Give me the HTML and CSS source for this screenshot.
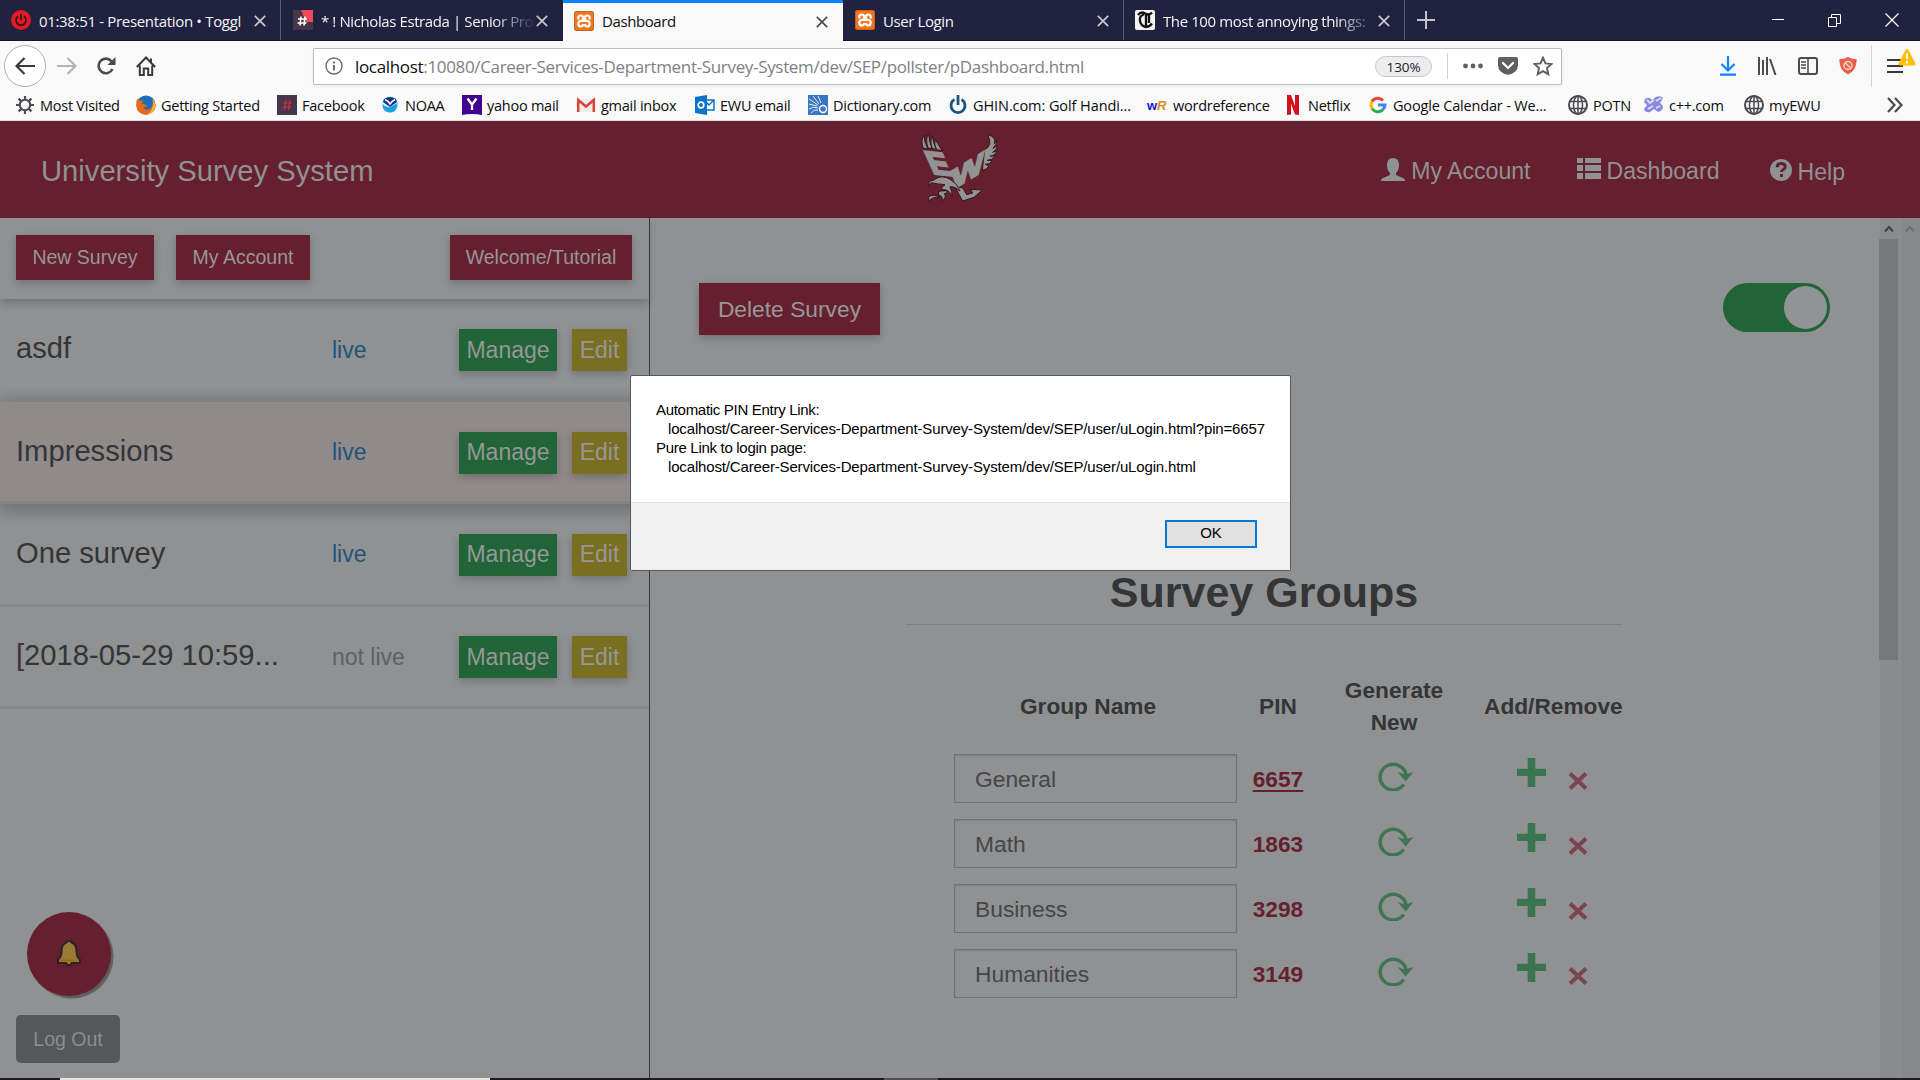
FILE: index.html
```html
<!DOCTYPE html>
<html lang="en">
<head>
<meta charset="utf-8">
<title>Dashboard</title>
<link rel="stylesheet" href="styles.css">
</head>
<body>
<svg class="defs" width="0" height="0">
  <symbol id="i-close" viewBox="0 0 12 12"><path d="M.8.8l10.400 10.400M11.200.8L.8 11.200" fill="none" stroke="currentColor" stroke-width="1.700"/></symbol>
  <symbol id="i-xampp" viewBox="0 0 20 20"><rect width="20" height="20" rx="3" fill="#f07722"/><rect x=".5" y=".5" width="19" height="19" rx="2.500" fill="none" stroke="#c9601a"/><g fill="none" stroke="#fff" stroke-width="2.200"><path d="M4.500 8.500Q3.500 4.500 6.500 4.500T9 7.500Q9 10 6.500 10Q4 10.500 4.300 13T7 15.500Q9 15.500 9 13M15.500 8.500Q16.500 4.500 13.500 4.500T11 7.500Q11 10 13.500 10Q16 10.500 15.700 13T13 15.500Q11 15.500 11 13M7 10h6"/></g></symbol>
  <symbol id="i-globe" viewBox="0 0 20 20"><g fill="none" stroke="#4a4a4f" stroke-width="1.500"><circle cx="10" cy="10" r="9" stroke-width="2"/><ellipse cx="10" cy="10" rx="4.500" ry="9"/><path d="M10 1v18M2 6.500h16M2 13.500h16"/></g></symbol>
  <symbol id="i-refresh" viewBox="0 0 36 30"><path d="M25.800 23.500A13 12.800 0 1 1 28 14v3" fill="none" stroke="currentColor" stroke-width="3.400"/><path d="M19.500 11l7.500 2.500 8.500-2.500-7.800 9.500z" fill="currentColor"/></symbol>
  <symbol id="i-plus" viewBox="0 0 29 29"><path d="M10.700 0h7.600v10.700H29v7.200H18.300V29h-7.600V17.900H0v-7.200h10.700z" fill="currentColor"/></symbol>
  <symbol id="i-cross" viewBox="0 0 20 18"><path d="M2 1.500l16 15M18 1.500l-16 15" fill="none" stroke="currentColor" stroke-width="4"/></symbol>
</svg>

<div class="window">
  <div class="tabs">
    <div class="tab">
      <svg class="fav" viewBox="0 0 20 20"><circle cx="10" cy="10" r="10" fill="#e01b22"/><path d="M7 6.200a5 5 0 1 0 6 0M10 4v6" fill="none" stroke="#3a1018" stroke-width="1.700"/></svg>
      <span class="tab-title">01:38:51 - Presentation • Toggl</span>
      <svg class="x"><use href="#i-close"/></svg>
    </div>
    <div class="tab">
      <svg class="fav" viewBox="0 0 20 20"><path d="M0 0h20v20H0z" fill="#47364a"/><path d="M8 0h12v12h-7z" fill="#ee4a5d"/><path d="M8 6.500l-1 9M12 6.500l-1 9M5 9h9M4.500 13h9" stroke="#fff" stroke-width="1.600"/></svg>
      <span class="tab-title fade">* ! Nicholas Estrada | Senior Pro</span>
      <svg class="x"><use href="#i-close"/></svg>
    </div>
    <div class="tab active">
      <svg class="fav"><use href="#i-xampp"/></svg>
      <span class="tab-title">Dashboard</span>
      <svg class="x"><use href="#i-close"/></svg>
    </div>
    <div class="tab">
      <svg class="fav"><use href="#i-xampp"/></svg>
      <span class="tab-title">User Login</span>
      <svg class="x"><use href="#i-close"/></svg>
    </div>
    <div class="tab">
      <svg class="fav" viewBox="0 0 20 20"><rect width="20" height="20" rx="2" fill="#f4f4f4"/><path d="M3 5q3-4 7-1.500T17 2.500M9 4.500Q4 6 5 11t6 6q4-.5 6-3.500M11 5v11M14 4v9" fill="none" stroke="#111" stroke-width="2.300"/></svg>
      <span class="tab-title fade">The 100 most annoying things:</span>
      <svg class="x"><use href="#i-close"/></svg>
    </div>
    <svg class="newtab" viewBox="0 0 18 18"><path d="M9 0v18M0 9h18" stroke="#c3c3cb" stroke-width="2"/></svg>
    <div class="winctl">
      <svg width="12" height="12"><path d="M0 5.500h12" stroke="#fff"/></svg>
      <svg width="13" height="13" fill="none" stroke="#fff"><path d="M.5 3.500h8v9h-8zM3.500 3.500v-3h9v9h-4"/></svg>
      <svg width="14" height="14" stroke="#fff" stroke-width="1.200"><path d="M.5.500l13 13M13.500.500l-13 13"/></svg>
    </div>
  </div>

  <div class="nav">
    <div class="nav-left">
      <span class="back"><svg width="20" height="18" fill="none" stroke="#38383d" stroke-width="2.200"><path d="M1 9h19M9.500 1L1.500 9l8 8"/></svg></span>
      <svg width="20" height="18" fill="none" stroke="#b4b4b6" stroke-width="2.200"><path d="M0 9h19M10.500 1l8 8-8 8"/></svg>
      <svg width="20" height="20" fill="none" stroke="#4a4a4f" stroke-width="2.600"><path d="M15.700 5.500A7.300 7.300 0 1 0 16.500 13"/><path d="M19.500 1v8h-8z" fill="#4a4a4f" stroke="none"/></svg>
      <svg width="20" height="20" fill="none" stroke="#38383d" stroke-width="2"><path d="M.8 11L10 1.500 19.200 11M3.800 9.500V19h4v-6.500h4.400V19h4V9.500M15 6V2.500"/></svg>
    </div>
    <div class="urlbar">
      <svg class="info" width="18" height="18" fill="none" stroke="#6d6d71" stroke-width="1.400"><circle cx="9" cy="9" r="8"/><path d="M9 8v5.500M9 4.500v2" stroke-width="2"/></svg>
      <span class="url"><b>localhost</b>:10080/Career-Services-Department-Survey-System/dev/SEP/pollster/pDashboard.html</span>
      <span class="zoom">130%</span>
      <i class="vsep"></i>
      <svg width="20" height="6" fill="#606064"><circle cx="2.500" cy="3" r="2.400"/><circle cx="10" cy="3" r="2.400"/><circle cx="17.500" cy="3" r="2.400"/></svg>
      <svg width="20" height="18"><path d="M2 0h16q2 0 2 2v6a10 9.700 0 0 1-20 0V2q0-2 2-2z" fill="#606064"/><path d="M5 6l5 5 5-5" fill="none" stroke="#fff" stroke-width="2.200" stroke-linecap="round"/></svg>
      <svg width="20" height="20"><path d="M10 1.800l2.500 5.600 6 .6-4.500 4.100 1.300 6.100L10 15.100l-5.300 3.100L6 12.100 1.500 8l6-.6z" fill="none" stroke="#606064" stroke-width="2"/></svg>
    </div>
    <div class="nav-right">
      <svg width="16" height="20" fill="none" stroke="#0a84ff" stroke-width="2.200"><path d="M8 0v14M1.500 8L8 14.500 14.500 8M0 18.700h16"/></svg>
      <svg width="20" height="18" stroke="#4a4a4f" stroke-width="2"><path d="M2 0v18M6 3v15M10 0v18M13 2l5.500 16"/></svg>
      <svg width="20" height="18" fill="none" stroke="#4a4a4f" stroke-width="2"><rect x="1" y="1" width="18" height="16" rx="2"/><path d="M10 1v16M3 5h5M3 8h5M3 11h5" stroke-width="1.500"/></svg>
      <svg width="18" height="18"><path d="M9 0q4 2.500 8.500 2Q18.500 13 9 17.500-.5 13 .5 2 5 2.500 9 0z" fill="#e8604a"/><g fill="none" stroke="#fbd5c8" stroke-width="1.400"><circle cx="9" cy="8.500" r="4"/><path d="M6.200 5.700l5.600 5.600"/></g></svg>
      <i class="vsep tall"></i>
      <span class="menu"><svg width="16" height="16" stroke="#38383d" stroke-width="2"><path d="M0 2h16M0 8h16M0 14h16"/></svg><svg class="warn" width="18" height="17"><path d="M9 0q1 0 1.600 1.200L17.300 14q.7 2.500-1.500 2.500H2.200Q0 16.500.7 14L7.400 1.200Q8 0 9 0z" fill="#ffbf00"/><path d="M9 4.500v5.500M9 12v2.500" stroke="#fff" stroke-width="2.200"/></svg></span>
    </div>
  </div>

  <div class="bookmarks">
    <span><svg viewBox="0 0 20 20" fill="none" stroke="#4a4a4f"><circle cx="10" cy="10" r="5.200" stroke-width="2"/><path d="M10 1v4M10 15v4M1 10h4M15 10h4M3.600 3.600l2.800 2.800M13.600 13.600l2.800 2.800M16.400 3.600l-2.800 2.800M6.400 13.600l-2.800 2.800" stroke-width="2.200"/></svg>Most Visited</span>
    <span><svg viewBox="0 0 20 20"><circle cx="10" cy="10" r="9.500" fill="#1b6fb8"/><path d="M1 4q3 2 6 1.500L6 9q5 0 5 2-2 2-4 1 3 5 8 1 3-4 1-9 4 3 3.500 8Q18 19 10 19.800 1 19 .3 11 0 7 1 4z" fill="#ea6a1c"/><path d="M17 5q3 4 2 8-3 6-8 6.500 7-4 6-14.500z" fill="#f6b32b"/></svg>Getting Started</span>
    <span><svg viewBox="0 0 20 20"><path d="M0 0h20v20H0z" fill="#47364a"/><path d="M9 4.500L7.500 15M13 4.500L11.500 15M6 8h9M5.500 12h9" stroke="#ca3345" stroke-width="1.200"/></svg>Facebook</span>
    <span><svg viewBox="0 0 20 20"><circle cx="9" cy="9.500" r="8.500" fill="#d7effb"/><path d="M3 4q6-4 12 0l1 3-7 5-7-5z" fill="#12358a"/><path d="M1.500 9q3.500 4 7.500 3l7.500-4q0 9.500-7.500 9.500T1.500 9z" fill="#1ba0e0"/><path d="M4 4.500Q7.500 6 9 9q2-3 5-4.500" fill="none" stroke="#fff" stroke-width="1.500"/></svg>NOAA</span>
    <span><svg viewBox="0 0 20 20"><path d="M0 0h20v20q-10-2-20 0z" fill="#400090"/><path d="M5.500 3.500L10 9.500V15M14.500 3.500L10 9.500" fill="none" stroke="#fff" stroke-width="2.300"/></svg>yahoo mail</span>
    <span><svg viewBox="0 0 20 20"><path d="M1 4h18v13H1z" fill="#ececec"/><path d="M2.200 17V5l7.800 6.500L17.800 5v12" fill="none" stroke="#d8453a" stroke-width="2.500"/></svg>gmail inbox</span>
    <span><svg viewBox="0 0 20 20"><path d="M10 5h9v10h-9z" fill="#fff" stroke="#0a72c8" stroke-width="1.500"/><path d="M11 7l3 3 5-5" fill="none" stroke="#0a72c8" stroke-width="1.500"/><path d="M0 2l12-2v20L0 18z" fill="#0a72c8"/><circle cx="6" cy="10" r="2.800" fill="none" stroke="#fff" stroke-width="1.700"/></svg>EWU email</span>
    <span><svg viewBox="0 0 20 20"><path d="M0 0h20v20H0z" fill="#3a76c4"/><path d="M1 4l9 6M5 1l6 8M10 1l3 7M1 9l8 2M1 14q5-3 9-1M3 18q3-4 7-3" stroke="#e3edf8" fill="none"/><circle cx="15" cy="14" r="3.500" fill="none" stroke="#fff" stroke-width="1.500"/></svg>Dictionary.com</span>
    <span><svg viewBox="0 0 20 20" fill="none" stroke="#1d5480" stroke-width="2.800"><path d="M6.500 4.500a7 7 0 1 0 7 0M10 0v10"/></svg>GHIN.com: Golf Handi...</span>
    <span><svg viewBox="0 0 20 20"><text x="-1" y="15" class="wr" fill="#1414d0">w</text><text x="9" y="15" class="wr it" fill="#d98b1c">R</text></svg>wordreference</span>
    <span><svg viewBox="0 0 20 20"><path d="M4 0h4l4 11V0h4v20q-2-.5-4-.5L8 9v10.500q-2 0-4 .5z" fill="#d3101c"/></svg>Netflix</span>
    <span><svg viewBox="0 0 20 20" fill="none" stroke-width="3"><path d="M15 5.500A7 7 0 0 0 4 6.500" stroke="#ea4335"/><path d="M4 6.500a7 7 0 0 0 0 7" stroke="#fbbc05"/><path d="M4 13.500a7 7 0 0 0 10.500 1.500" stroke="#34a853"/><path d="M14.500 15A7 7 0 0 0 17 10h-7" stroke="#4285f4"/></svg>Google Calendar - We...</span>
    <span><svg><use href="#i-globe"/></svg>POTN</span>
    <span><svg viewBox="0 0 20 20"><path d="M1 4q4-3 7 1l4-3q5-2 7 1l-3 5 3 3q0 5-5 6l-4-3-4 3q-5 1-6-3l3-4-3-3z" fill="#8c88dd"/><path d="M3 5l3 3 4-3M12 6l5-3M4 14l5-3M12 13l4-2" stroke="#e0deff" stroke-width="1.800" fill="none"/></svg>c++.com</span>
    <span><svg><use href="#i-globe"/></svg>myEWU</span>
    <span><svg class="more" viewBox="0 0 16 16" fill="none" stroke="#4a4a4f" stroke-width="2.200"><path d="M1 1l6.500 7L1 15M8 1l6.500 7L8 15"/></svg></span>
  </div>

  <header class="app-header">
    <h1>University Survey System</h1>
    <svg class="logo" viewBox="0 0 360 300">
      <g stroke="#35161d" stroke-width="3" fill="#929394" stroke-linejoin="round">
        <path d="M70 94Q60 68 74 53Q70 70 84 95zM84 93Q75 65 86 50Q86 72 97 95zM97 95Q88 72 97 57Q99 77 109 97zM109 98Q101 80 106 67Q113 82 127 101z"/>
        <path d="M254 98Q280 85 263 53Q290 60 283 80L291 68Q290 84 279 94L292 86Q290 100 278 106L291 101Q284 117 270 118L286 116Q276 130 262 130L278 131Q268 143 256 142L267 147Q260 158 247 160z"/>
        <path d="M163 206L188 252L222 241L247 219L212 217L218 228L200 233L189 214z"/>
      </g>
      <g class="mark" fill="#929394" stroke="#929394" stroke-width="7">
        <text transform="matrix(.96 .1 .45 .98 98 170)">E</text>
        <text transform="matrix(1.020 -.62 0 .84 155 220)">W</text>
      </g>
      <g stroke="#35161d" stroke-width="3" fill="#929394" stroke-linejoin="round">
        <path d="M86 206Q85 190 100 190Q125 170 152 188Q172 200 180 222Q163 207 150 209Q156 224 157 238Q145 215 128 218Q120 214 135 203Q110 201 94 197z"/>
        <path d="M128 222Q112 220 116 234Q129 236 127 252Q141 240 133 230Q146 229 140 221zM86 239Q103 229 119 241Q107 239 99 243Q89 247 90 252Q84 247 86 239z"/>
      </g>
    </svg>
    <nav>
      <a><svg width="24" height="23"><path d="M12 0q6 0 6 7 0 5-3 8v2l8 3.500q1 .5 1 2.500H0q0-2 1-2.500L9 17v-2q-3-3-3-8 0-7 6-7z" fill="currentColor"/></svg>My Account</a>
      <a><svg width="24" height="21" fill="currentColor"><path d="M0 0h6v5H0zM8 0h16v5H8zM0 7h6v6H0zM8 7h16v6H8zM0 15h6v6H0zM8 15h16v6H8z"/></svg>Dashboard</a>
      <a class="help"><svg width="22" height="22"><circle cx="11" cy="11" r="11" fill="currentColor"/><path d="M7.200 8.300q0-3.800 4-3.800t4 3.300q0 1.700-1.800 2.700-1.900 1-1.900 2.500M11.500 15v3" fill="none" stroke="#661f2f" stroke-width="3"/></svg>Help</a>
    </nav>
  </header>

  <div class="app">
    <aside>
      <div class="actions"><button>New Survey</button><button class="account">My Account</button><button class="tutorial">Welcome/Tutorial</button></div>
      <div class="survey"><span class="name">asdf</span><span class="live">live</span><button class="manage">Manage</button><button class="edit">Edit</button></div>
      <div class="survey selected"><span class="name">Impressions</span><span class="live">live</span><button class="manage">Manage</button><button class="edit">Edit</button></div>
      <div class="survey"><span class="name">One survey</span><span class="live">live</span><button class="manage">Manage</button><button class="edit">Edit</button></div>
      <div class="survey"><span class="name">[2018-05-29 10:59...</span><span class="live off">not live</span><button class="manage">Manage</button><button class="edit">Edit</button></div>
      <div class="side-foot">
        <div class="bell"><svg width="24" height="27" viewBox="0 0 24 27"><path d="M9.500 2.500Q12-1 14.500 2.500 19.500 4 19.500 11q0 6 3.500 8.500V23h-8q-3 4.500-6 0H1v-3.500Q4.500 17 4.500 11 4.500 4 9.500 2.500z" fill="#9a7936" stroke="#24252a" stroke-width="2"/><path d="M3 19.500h18v2H3z" fill="#a36a12"/></svg></div>
        <button class="logout">Log Out</button>
      </div>
    </aside>
    <main>
      <div class="main-top"><button class="delete">Delete Survey</button><div class="toggle"><i></i></div></div>
      <section class="groups">
        <h2>Survey Groups</h2>
        <div class="grid head"><span>Group Name</span><span>PIN</span><span>Generate New</span><span>Add/Remove</span></div>
        <div class="grid"><div class="input">General</div><b class="pin on">6657</b><svg class="refresh"><use href="#i-refresh"/></svg><div class="ar"><svg class="plus"><use href="#i-plus"/></svg><svg class="cross"><use href="#i-cross"/></svg></div></div>
        <div class="grid"><div class="input">Math</div><b class="pin">1863</b><svg class="refresh"><use href="#i-refresh"/></svg><div class="ar"><svg class="plus"><use href="#i-plus"/></svg><svg class="cross"><use href="#i-cross"/></svg></div></div>
        <div class="grid"><div class="input">Business</div><b class="pin">3298</b><svg class="refresh"><use href="#i-refresh"/></svg><div class="ar"><svg class="plus"><use href="#i-plus"/></svg><svg class="cross"><use href="#i-cross"/></svg></div></div>
        <div class="grid"><div class="input">Humanities</div><b class="pin">3149</b><svg class="refresh"><use href="#i-refresh"/></svg><div class="ar"><svg class="plus"><use href="#i-plus"/></svg><svg class="cross"><use href="#i-cross"/></svg></div></div>
      </section>
    </main>
    <div class="scroll"><svg width="10" height="8"><path d="M1 6.500L5 2l4 4.500" fill="none" stroke="#404142" stroke-width="2"/></svg><i></i></div>
    <div class="scroll outer"><svg width="10" height="8"><path d="M1 6.500L5 2l4 4.500" fill="none" stroke="#6c6d6e" stroke-width="2"/></svg></div>
  </div>
  <div class="taskbar"><i class="light"></i><i class="mid"></i></div>
</div>

<div class="dialog">
  <div class="dialog-body">
    <p>Automatic PIN Entry Link:</p>
    <p class="ind">localhost/Career-Services-Department-Survey-System/dev/SEP/user/uLogin.html?pin=6657</p>
    <p>Pure Link to login page:</p>
    <p class="ind">localhost/Career-Services-Department-Survey-System/dev/SEP/user/uLogin.html</p>
  </div>
  <div class="dialog-foot"><button>OK</button></div>
</div>
</body>
</html>
```
FILE: styles.css
```css
* { box-sizing: border-box; }
body { margin: 0; overflow: hidden; font-family: "Liberation Sans", Arial, sans-serif; }
svg { display: block; flex: none; }
.defs { position: absolute; }
button { font-family: inherit; border: 0; padding: 0; margin: 0; flex: none; white-space: nowrap; }
.window { width: 1920px; height: 1080px; display: flex; flex-direction: column; background: #909192; }

/* browser chrome */
.tabs, .nav, .bookmarks { font-family: "Open Sans", "Noto Sans", sans-serif; }
.tabs { height: 41px; flex: none; background: #20223f; display: flex; align-items: stretch; border-bottom: 1px solid #15162c; }
.tab { width: 281px; padding: 0 14px 0 11px; display: flex; align-items: center; color: #f4f4f8; border-right: 1px solid #5c5d70; font-size: 15px; }
.tab:nth-child(2) { width: 282px; border-color: #20223f; padding-left: 12px; }
.tab:nth-child(4) { padding-left: 12px; }
.tab .fav { width: 20px; height: 20px; margin-right: 8px; }
.tab-title { flex: 1; white-space: nowrap; letter-spacing: -0.4px; line-height: 24px; padding-top: 1px; }
.tab:first-child .tab-title { letter-spacing: -.33px; }
.fade { -webkit-mask-image: linear-gradient(90deg, #000 80%, transparent 100%); mask-image: linear-gradient(90deg, #000 80%, transparent 100%); }
.tab .x { width: 12px; height: 12px; color: #c9c9d0; margin-top: 2px; }
.tab.active { background: #f9f9fa; color: #0c0c0d; border: 0; border-top: 3px solid #0a84ff; width: 280px; margin-bottom: -1px; padding: 0 15px 3px 11px; }
.tab.active .x { color: #4a4a4f; }
.newtab { width: 18px; height: 18px; margin: 11px 0 0 12px; }
.winctl { margin-left: auto; display: flex; align-items: center; gap: 44px; padding-right: 21px; }
.nav { height: 50px; flex: none; background: #f9f9fa; display: flex; align-items: center; }
.nav-left { width: 313px; padding-left: 4px; display: flex; align-items: center; gap: 19.500px; }
.back { width: 42px; height: 42px; border: 1px solid #b1b1b3; border-radius: 50%; background: #fff; display: flex; align-items: center; justify-content: center; margin-right: -9px; }
.urlbar { width: 1249px; height: 37px; background: #fff; border: 1px solid #bdbdbf; border-radius: 2px; box-shadow: 0 1px 3px rgba(0,0,0,.08); display: flex; align-items: center; padding: 0 8px 0 11px; gap: 15px; }
.url { flex: 1; color: #808084; font-size: 17px; letter-spacing: -0.33px; margin-left: -3px; white-space: nowrap; }
.url b { font-weight: 400; color: #0c0c0d; }
.zoom { width: 57px; height: 21px; border: 1px solid #c6c6c8; border-radius: 11px; background: #ededf0; color: #222; font-size: 13.5px; line-height: 20px; text-align: center; letter-spacing: -.1px; }
.vsep { width: 1px; height: 26px; background: #d2d2d4; }
.vsep.tall { height: 42px; margin: 0 -6px 0 -7px; }
.nav-right { margin-left: auto; display: flex; align-items: center; gap: 21px; padding-right: 17px; }
.menu { position: relative; }
.warn { position: absolute; left: 11px; top: -9px; }
.bookmarks { height: 30px; flex: none; background: #f9f9fa; border-bottom: 1px solid #ddd; display: grid; grid-template-columns: 121px 141px 104px 81px 114px 119px 113px 140px 200px 135px 85px 200px 76px 100px 143px 1fr; padding: 0 0 1px 15px; align-items: center; font-size: 14.500px; letter-spacing: -.25px; color: #0c0c0d; }
.bookmarks span { display: flex; align-items: center; gap: 5px; white-space: nowrap; }
.bookmarks span:nth-child(4) { gap: 4px; }
.bookmarks span:nth-child(9) { letter-spacing: -.08px; }
.bookmarks span:nth-child(12) { letter-spacing: -.17px; }
.bookmarks svg { width: 20px; height: 20px; overflow: visible; margin-top: -1px; }
.bookmarks .more { width: 16px; height: 16px; }
.wr { font: bold 13px "Liberation Sans", sans-serif; }
.it { font-style: italic; }

/* application header */
.app-header { height: 97px; flex: none; background: #661f2f; color: #909192; display: grid; grid-template-columns: 900px 120px 1fr; align-items: center; }
.app-header h1 { margin: 4px 0 0 41px; font-size: 29.200px; font-weight: 400; }
.logo { width: 120px; height: 100px; margin-top: -5px; }
.mark { font: bold 100px "Liberation Sans", sans-serif; }
nav { display: flex; padding: 5px 75px 0 0; justify-content: flex-end; font-size: 23.100px; }
nav a { display: flex; gap: 6px; align-items: flex-start; line-height: 27px; }
nav a + a { margin-left: 46px; }
nav a.help { margin-left: 50px; padding-top: 1px; }
nav svg { margin-top: 0; }

/* survey list */
.app { flex: 1; min-height: 0; display: flex; color: #333536; }
aside { width: 650px; border-right: 1px solid #38393a; display: flex; flex-direction: column; }
.actions { height: 81px; flex: none; padding: 17px 18px 0 16px; display: flex; align-items: flex-start; box-shadow: 0 5px 8px rgba(0,0,0,.18); position: relative; }
.actions button { width: 138px; height: 45px; margin-right: 22px; background: #661f2f; color: #969798; font-size: 19.500px; box-shadow: 0 3px 8px rgba(0,0,0,.22); }
.actions .account { width: 134px; }
.actions .tutorial { width: 182px; margin: 0 -1px 0 auto; }
.survey { height: 102.300px; flex: none; display: grid; grid-template-columns: 316px 127px 98px 55px; padding: 0 0 0 16px; align-items: center; border-bottom: 3px solid #868788; font-size: 23px; }
.survey:nth-child(2) { height: 103px; border-bottom-color: transparent; }
.name { font-size: 29.200px; padding-bottom: 1px; }
.live { color: #20557a; font-size: 23px; padding-top: 2px; }
.live.off { color: #606163; }
.survey button { height: 42px; margin-top: 2px; font-size: 23px; color: #969798; box-shadow: 0 3px 8px rgba(0,0,0,.22); }
.survey .manage { background: #206437; }
.survey .edit { background: #7a6f20; margin-left: 15px; width: 55px; }
.selected { background: #918a8b; border-bottom-color: #868282; box-shadow: 0 3px 18px 3px rgba(0,0,0,.25); clip-path: inset(-14px 0 -22px 0); position: relative; }
.side-foot { margin-top: auto; padding: 0 0 15px 16px; }
.bell { width: 84px; height: 84px; margin: 0 0 19px 11px; border-radius: 50%; background: #661f2f; box-shadow: 2.500px 2.500px 1px #5c5d5e; display: flex; align-items: center; justify-content: center; padding-bottom: 2px; }
.logout { width: 104px; height: 48px; border-radius: 5px; background: #565758; color: #8b8c8d; font-size: 19.500px; }

/* survey detail */
main { flex: 1; display: flex; flex-direction: column; }
.main-top { display: flex; justify-content: space-between; align-items: flex-start; padding: 65px 49px 0 49px; }
.delete { width: 181px; height: 52px; background: #661f2f; color: #969798; font-size: 22.800px; box-shadow: 0 3px 8px rgba(0,0,0,.22); }
.toggle { width: 107px; height: 49px; border-radius: 25px; background: #206437; display: flex; justify-content: flex-end; padding: 3px; }
.toggle i { width: 43px; height: 43px; border-radius: 50%; background: #929394; }
.groups { margin: 231px 0 0 256px; width: 716px; }
h2 { margin: 0; text-align: center; font-size: 43px; line-height: 53px; height: 59px; border-bottom: 1px solid #7e7f80; }
.grid { display: grid; grid-template-columns: 283px 82px 150px 155px; padding-left: 48px; height: 65px; align-items: start; color: #333536; }
.head { height: auto; padding: 49px 0 16px 48px; font-weight: 700; font-size: 22.700px; line-height: 32px; align-items: center; text-align: center; }
.head span:first-child { padding-right: 15px; }
.head span:nth-child(3) { padding: 0 20px; }
.head span:nth-child(4) { text-align: left; padding-left: 15px; }
.input { height: 49px; border: 1px solid #717273; box-shadow: inset 0 1px 2px rgba(0,0,0,.12); padding-left: 20px; font-size: 22.800px; line-height: 49px; color: #454647; }
.pin { font-size: 22.700px; color: #661f2f; text-align: center; line-height: 50px; }
.on { text-decoration: underline; text-decoration-thickness: 2px; text-underline-offset: 3px; }
.refresh { width: 36px; height: 30px; color: #3f7552; margin: 7px 0 0 59px; }
.ar { display: flex; align-items: flex-start; padding: 4px 0 0 48px; gap: 22px; }
.plus { width: 29px; height: 29px; color: #3a7450; }
.cross { width: 20px; height: 18px; color: #7c4351; margin-top: 14px; }
.scroll { width: 21px; background: #8a8b8c; border-left: 1px solid #8f9091; padding-top: 7px; display: flex; flex-direction: column; }
.scroll svg { margin-left: 4px; }
.scroll i { width: 19px; height: 421px; background: #77787a; margin: 6px 0 0 -1px; }
.outer { background: #87888a; width: 20px; }
.taskbar { height: 2px; flex: none; background: #1c1c20; display: flex; padding-left: 60px; }
.light { width: 430px; background: #e6e6e2; }
.mid { width: 54px; margin-left: 394px; background: #505052; }

/* alert over the page */
.dialog { position: absolute; left: 630px; top: 375px; width: 661px; height: 196px; background: #fff; border: 1px solid #58595a; border-radius: 2px; display: flex; flex-direction: column; color: #000; }
.dialog-body { height: 126px; padding: 24px 0 0 25px; font-size: 15px; letter-spacing: -.155px; }
.dialog-body p { margin: 0; line-height: 19px; white-space: nowrap; }
.dialog-body p:first-child, .dialog-body p:nth-child(3) { letter-spacing: -.3px; }
.dialog-body .ind { padding-left: 12px; }
.dialog-foot { flex: 1; background: #f0f0f0; border-top: 1px solid #dfdfdf; display: flex; justify-content: flex-end; padding: 17px 33px 0 0; }
.dialog-foot button { width: 92px; height: 28px; border: 2px solid #0078d7; background: #e1e1e1; font-size: 15px; color: #000; padding-bottom: 4px; }
```
